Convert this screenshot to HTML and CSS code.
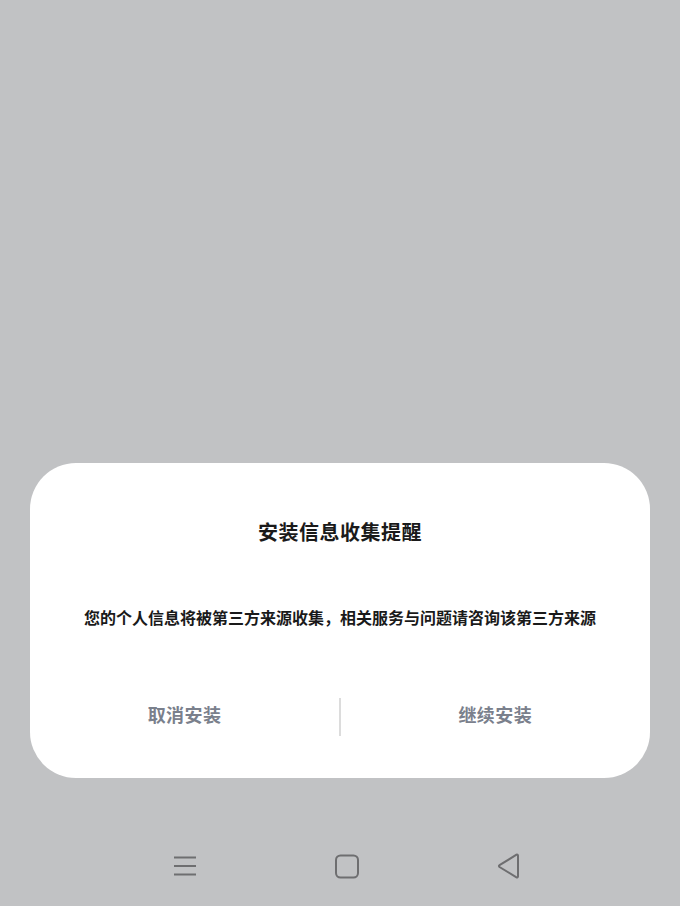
FILE: index.html
```html
<!DOCTYPE html>
<html>
<head>
<meta charset="utf-8">
<link rel="stylesheet" href="styles.css">
</head>
<body>
<div class="screen">
  <div class="spacer"></div>
  <div class="dialog">
    <div class="title">安装信息收集提醒</div>
    <div class="message">您的个人信息将被第三方来源收集，相关服务与问题请咨询该第三方来源</div>
    <div class="actions">
      <div class="btn">取消安装</div>
      <div class="divider"></div>
      <div class="btn">继续安装</div>
    </div>
  </div>
  <div class="navbar">
    <svg class="nav-icon" width="26" height="26" viewBox="0 0 26 26"><path d="M2 4.5H24M2 13H24M2 21.5H24" stroke="#6e6e70" stroke-width="2" fill="none"/></svg>
    <svg class="nav-icon" width="26" height="26" viewBox="0 0 26 26"><rect x="2" y="2.5" width="22" height="22" rx="4.5" stroke="#6e6e70" stroke-width="2" fill="none"/></svg>
    <svg class="nav-icon" width="26" height="26" viewBox="0 0 26 26"><path d="M22 2.5V23.5a1 1 0 0 1-1.5.8L3.5 14a1 1 0 0 1 0-1.8L20.5 1.7A1 1 0 0 1 22 2.5Z" stroke="#6e6e70" stroke-width="2" fill="none" stroke-linejoin="round"/></svg>
  </div>
</div>
</body>
</html>
```
FILE: styles.css
```css
html, body {
  margin: 0;
  padding: 0;
}
body {
  background: #c1c2c4;
  font-family: "Noto Sans CJK SC", "Noto Sans", sans-serif;
}
.screen {
  width: 680px;
  height: 906px;
  display: flex;
  flex-direction: column;
}
.spacer {
  height: 463px;
}
.dialog {
  margin: 0 30px;
  height: 315px;
  flex-shrink: 0;
  background: #ffffff;
  border-radius: 46px;
  display: flex;
  flex-direction: column;
  align-items: center;
}
.title {
  margin-top: 55px;
  font-size: 20px;
  font-weight: 700;
  color: #1a1a1a;
  letter-spacing: 0.5px;
  line-height: 28px;
}
.message {
  margin-top: 60px;
  font-size: 16px;
  font-weight: 700;
  color: #1a1a1a;
  line-height: 22px;
  white-space: nowrap;
}
.actions {
  margin-top: 70px;
  width: 100%;
  height: 38px;
  display: flex;
  align-items: center;
}
.btn {
  flex: 1;
  text-align: center;
  font-size: 18px;
  font-weight: 700;
  color: #7a808c;
  letter-spacing: 0.5px;
  padding-bottom: 7px;
}
.divider {
  width: 1.5px;
  height: 38px;
  background: #dcdcdc;
}
.navbar {
  margin-top: 75px;
  display: flex;
  justify-content: center;
  gap: 136px;
  padding-left: 14px;
}
.nav-icon {
  display: block;
}
```
